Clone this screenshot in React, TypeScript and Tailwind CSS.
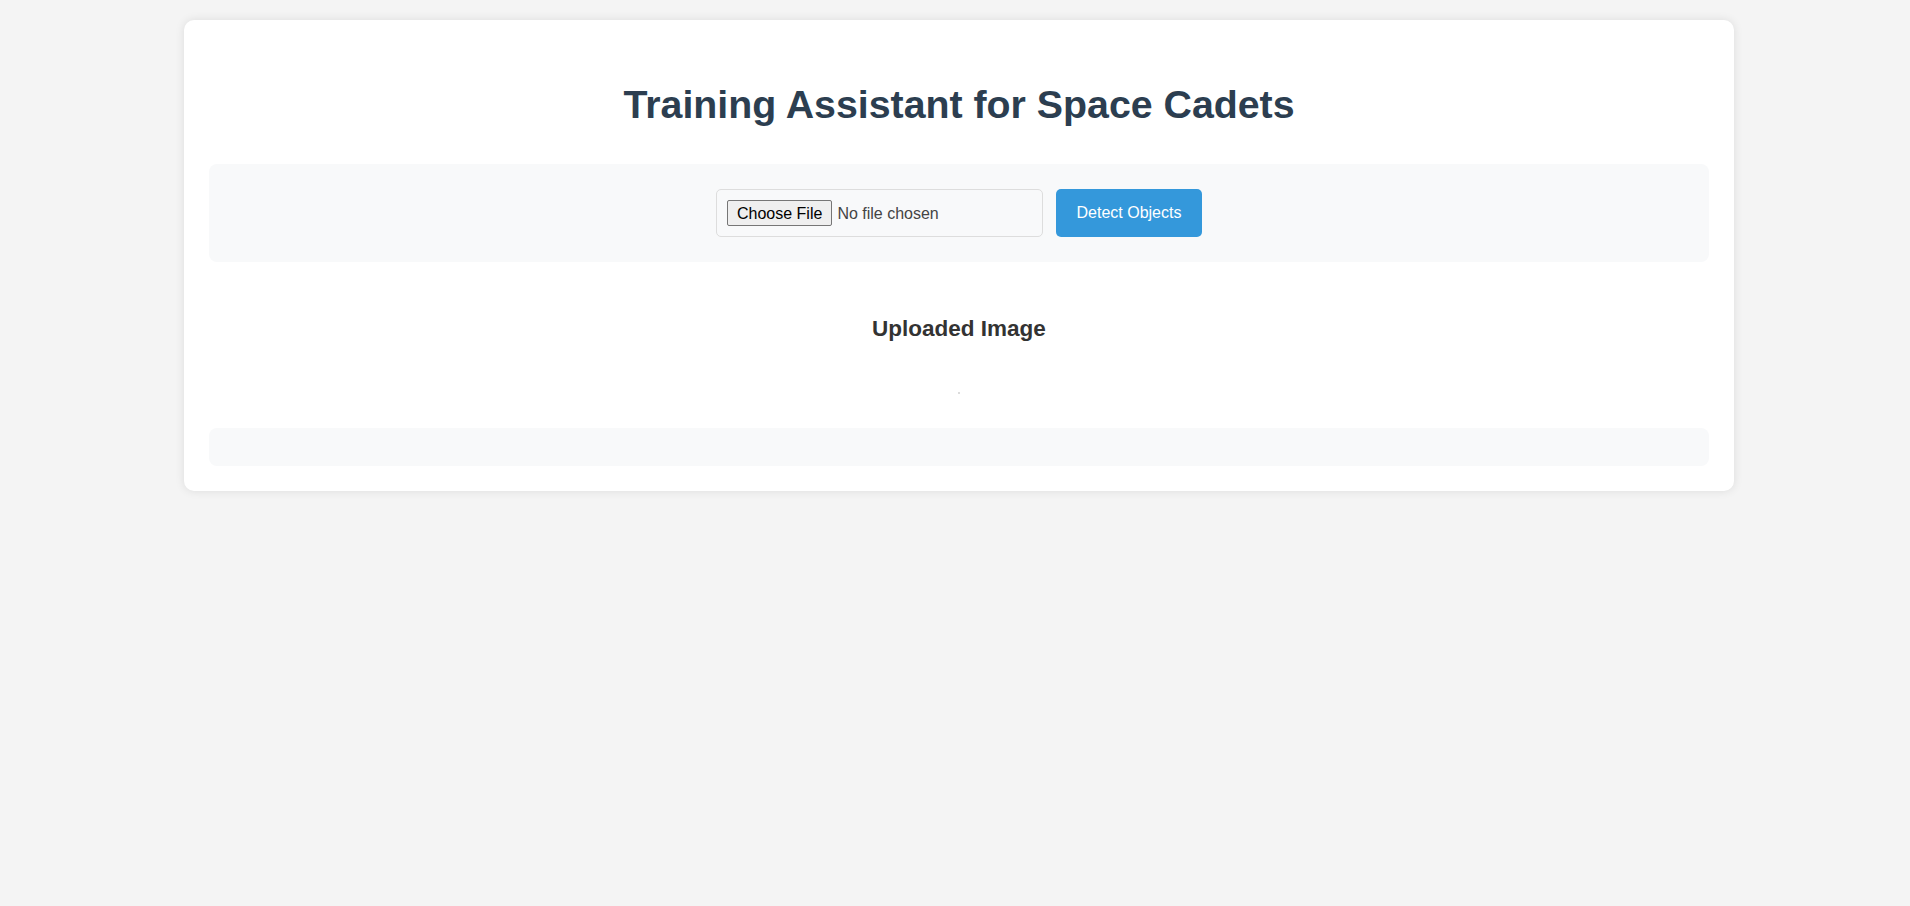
export default function App() {
  return (
    <div className="min-h-[906px] w-full bg-[#f4f4f4] pt-[20px] font-['Liberation_Sans',Arial,sans-serif]">
      <div className="ml-[184px] w-[1550px] rounded-[10px] bg-white px-[25px] pb-[25px] pt-[25px] shadow-[0_0_10px_rgba(0,0,0,0.1)]">
        <h1 className="mt-[37px] h-[45px] text-center text-[39.3px] font-bold leading-[45px] text-[#2c3e50]">
          Training Assistant for Space Cadets
        </h1>
        <div className="mt-[37px] flex h-[98px] items-center justify-center gap-[13px] rounded-[8px] bg-[#f8f9fa]">
          <input
            type="file"
            className="box-border h-[48px] w-[327px] rounded-[5px] border border-[#dddddd] px-[10px] py-[10px] text-[16px] leading-[26px] text-[#444] file:mr-[5px] file:h-[26px] file:rounded-[2px] file:border file:border-[#767676] file:bg-[#efefef] file:px-[9px] file:text-[16px] file:text-black"
          />
          <button className="h-[48px] w-[146px] rounded-[5px] bg-[#3498db] text-[16px] text-white">
            Detect Objects
          </button>
        </div>
        <h3 className="mt-[54px] h-[26px] text-center text-[22.5px] font-bold leading-[26px] text-[#333]">
          Uploaded Image
        </h3>
        <div className="mt-[50px] flex justify-center">
          <div className="h-[2px] w-[2px] bg-[#dcdcdc]" />
        </div>
        <div className="mt-[34px] h-[38px] rounded-[8px] bg-[#f8f9fa]" />
      </div>
    </div>
  );
}
